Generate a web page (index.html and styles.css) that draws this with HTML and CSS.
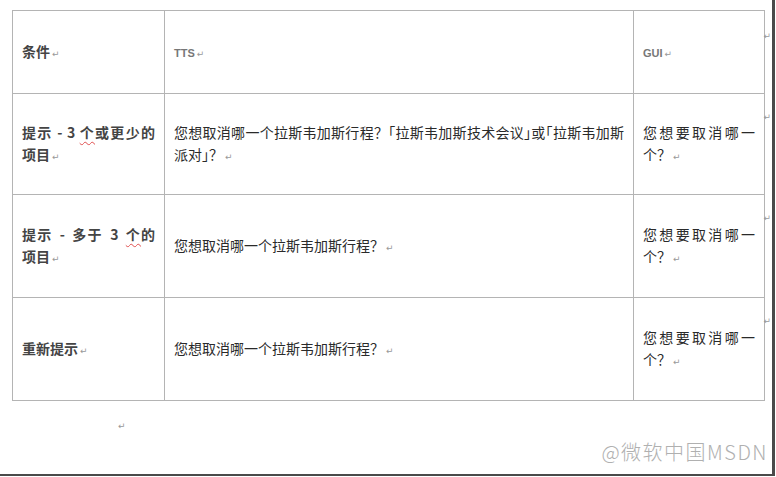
FILE: index.html
```html
<!DOCTYPE html>
<html lang="zh-CN">
<head>
  <meta charset="UTF-8" />
  <title>提示条件</title>
  <link rel="stylesheet" href="styles.css">
</head>
<body>
  <div class="sheet">
    <table class="grid">
      <tr class="head">
        <td class="c1"><b>条件</b><span class="pm">↵</span></td>
        <td class="c2"><b class="latin">TTS</b><span class="pm">↵</span></td>
        <td class="c3"><b class="latin">GUI</b><span class="pm">↵</span><span class="rowmark">↵</span></td>
      </tr>
      <tr class="r2">
        <td class="c1"><b>提示 - 3 <span class="typo">个</span>或更少的项目</b><span class="pm">↵</span></td>
        <td class="c2">您想取消哪一个拉斯韦加斯行程？<span class="ob">「</span>拉斯韦加斯技术会议<span class="cb">」</span>或<span class="ob">「</span>拉斯韦加斯派对<span class="cb">」</span>？<span class="pm">↵</span></td>
        <td class="c3 gui">您想要取消哪一个？<span class="pm">↵</span><span class="rowmark">↵</span></td>
      </tr>
      <tr class="r3">
        <td class="c1 wide"><b>提示 - 多于 3 <span class="typo">个</span>的项目</b><span class="pm">↵</span></td>
        <td class="c2">您想取消哪一个拉斯韦加斯行程？<span class="pm">↵</span></td>
        <td class="c3 gui">您想要取消哪一个？<span class="pm">↵</span><span class="rowmark">↵</span></td>
      </tr>
      <tr class="r4">
        <td class="c1"><b>重新提示</b><span class="pm">↵</span></td>
        <td class="c2">您想取消哪一个拉斯韦加斯行程？<span class="pm">↵</span></td>
        <td class="c3 gui">您想要取消哪一个？<span class="pm">↵</span><span class="rowmark">↵</span></td>
      </tr>
    </table>
    <p class="after"><span class="pm">↵</span></p>
    <div class="watermark">@微软中国MSDN</div>
  </div>
</body>
</html>
```

FILE: styles.css
```css
body {
  margin: 0;
  background: #fff;
  font-family: "Noto Sans CJK SC", "Liberation Sans", sans-serif;
  color: #2a2a2a;
}

.sheet {
  position: relative;
  width: 775px;
  height: 476px;
  border-right: 3px solid #4a4a4a;
  border-bottom: 2px solid #4a4a4a;
  padding: 10px 0 0 12px;
  box-sizing: border-box;
  overflow: hidden;
}

.grid {
  border-collapse: collapse;
  table-layout: fixed;
  width: 749px;
  font-size: 14px;
  line-height: 22px;
}

.grid td {
  border: 1px solid #b4b4b4;
  padding: 0 9px;
  vertical-align: middle;
  text-align: justify;
}

.c1 { width: 133px; }
.c2 { width: 450px; }
.c3 { width: 112px; position: relative; }

.head td { height: 82px; }
.r2 td { height: 100px; }
.r3 td, .r4 td { height: 102px; }

.grid b {
  font-weight: bold;
  color: #444;
}

.wide { word-spacing: 3px; }

.latin {
  font-family: "Liberation Sans", Arial, sans-serif;
  font-size: 11px;
  color: #777 !important;
}

.gui {
  text-align: justify;
  text-justify: inter-character;
}

.ob { margin-left: -7px; }
.cb { margin-right: -7px; }

.pm {
  font-family: "DejaVu Sans", sans-serif;
  font-size: 9px;
  color: #999;
  margin-left: 2px;
  word-spacing: 0;
}

.rowmark {
  position: absolute;
  right: -7px;
  top: 12px;
  font-family: "DejaVu Sans", sans-serif;
  font-size: 9px;
  color: #999;
}

.head .rowmark { top: 14px; }

.typo {
  text-decoration: underline wavy #e05050;
  text-decoration-thickness: 1px;
  text-underline-offset: 3px;
}

.after {
  margin: 14px 0 0 104px;
  line-height: 14px;
}

.watermark {
  position: absolute;
  right: 4px;
  bottom: 8px;
  font-family: "Noto Sans CJK SC", "DejaVu Sans", sans-serif;
  font-weight: 300;
  font-size: 20px;
  letter-spacing: 1.5px;
  color: #b0b0b0;
}
```
